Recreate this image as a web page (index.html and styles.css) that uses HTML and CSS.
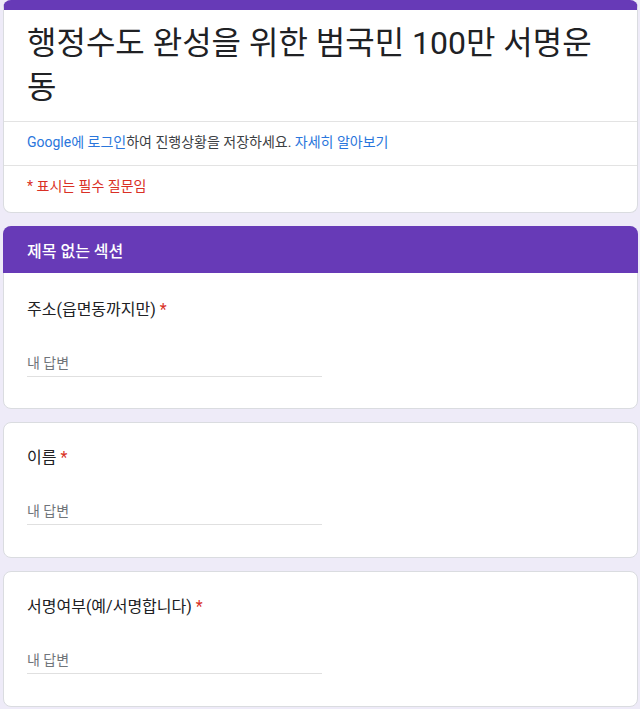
FILE: index.html
```html
<!DOCTYPE html>
<html lang="ko">
<head>
<meta charset="utf-8">
<title>행정수도 완성을 위한 범국민 100만 서명운동</title>
<link rel="stylesheet" href="styles.css">
</head>
<body>
<main class="page">
  <section class="card card-head">
    <h1 class="form-title">행정수도 완성을 위한 범국민 100만 서명운동</h1>
    <div class="row login-row"><span class="link">Google에 로그인</span>하여 진행상황을 저장하세요. <span class="link">자세히 알아보기</span></div>
    <div class="row required-row">* 표시는 필수 질문임</div>
  </section>

  <section class="card card-section">
    <div class="section-bar">제목 없는 섹션</div>
    <div class="question q-first">
      <div class="q-title">주소(읍면동까지만) <span class="star">*</span></div>
      <div class="answer">내 답변</div>
    </div>
  </section>

  <section class="card">
    <div class="question">
      <div class="q-title">이름 <span class="star">*</span></div>
      <div class="answer">내 답변</div>
    </div>
  </section>

  <section class="card">
    <div class="question">
      <div class="q-title">서명여부(예/서명합니다) <span class="star">*</span></div>
      <div class="answer">내 답변</div>
    </div>
  </section>
</main>
</body>
</html>
```

FILE: styles.css
```css
* { box-sizing: border-box; }
html, body { margin: 0; padding: 0; }
body {
  background: #eeebf8;
  font-family: Roboto, "Noto Sans CJK KR", sans-serif;
  color: #202124;
  height: 709px;
  overflow: hidden;
}
.page {
  padding: 0 2px 0 3px;
  display: flex;
  flex-direction: column;
  gap: 13px;
}
.card {
  background: #fff;
  border: 1px solid #dadce0;
  border-radius: 8px;
}
.card-head {
  border-top: 10px solid #673ab7;
}
.form-title {
  margin: 0;
  padding: 11px 24px 12px 23px;
  font-size: 32px;
  font-weight: 400;
  line-height: 44px;
  color: #202124;
}
.row {
  border-top: 1px solid #e3e3e3;
  padding: 10px 23px 0;
  font-size: 14px;
  line-height: 20px;
  white-space: nowrap;
}
.login-row {
  height: 44px;
  color: #3c4043;
}
.link { color: #2a76dc; }
.required-row {
  height: 47px;
  color: #d93025;
}
.section-bar {
  background: #673ab7;
  color: #fff;
  height: 47px;
  padding: 0 24px;
  display: flex;
  align-items: center;
  font-size: 16px;
  font-weight: 500;
  margin: -1px -1px 0;
  border-radius: 8px 8px 0 0;
}
.question {
  padding: 23px 23px 32px;
}
.q-first { padding-top: 25px; padding-bottom: 31px; }
.q-title {
  font-size: 16px;
  line-height: 24px;
}
.star { color: #d93025; }
.answer {
  margin-top: 31px;
  width: 295px;
  font-size: 14px;
  line-height: 20px;
  color: #70757a;
  padding-bottom: 3px;
  border-bottom: 1px solid #e0e0e0;
}
```
